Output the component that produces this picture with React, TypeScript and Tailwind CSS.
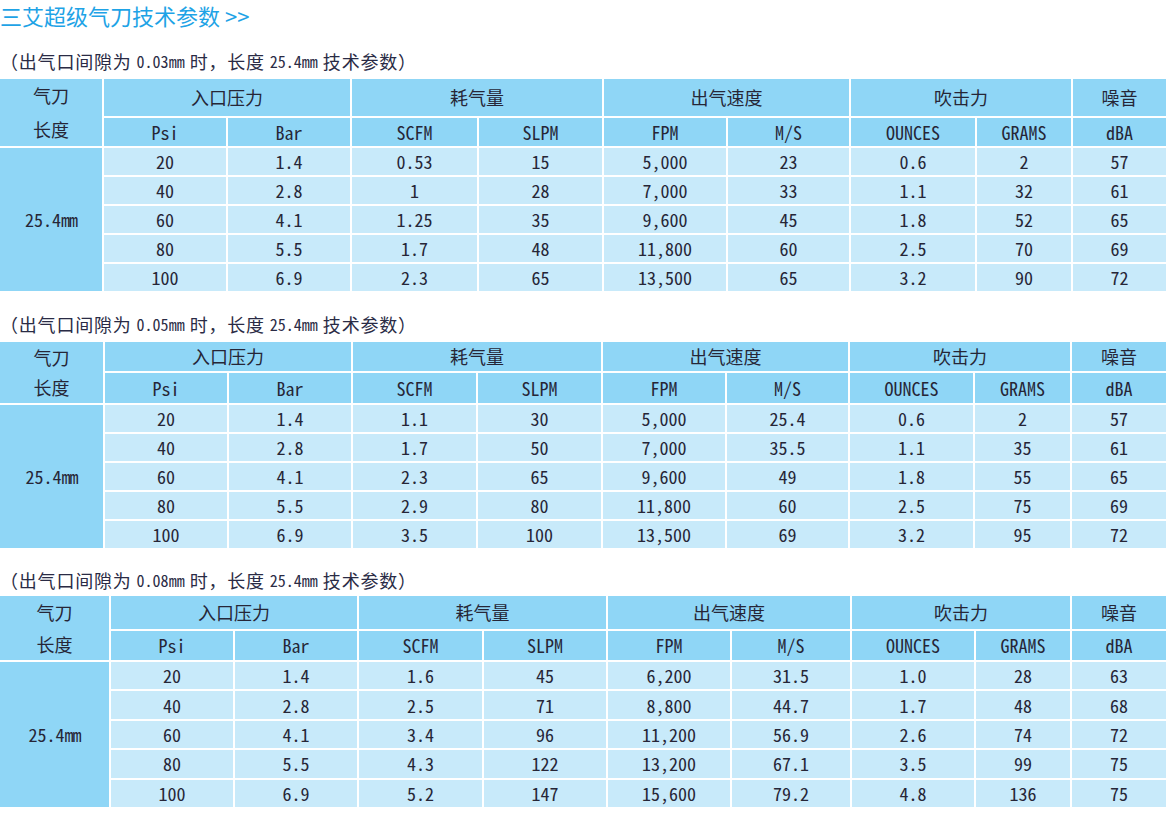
const CJK = "font-['Noto_Sans_Mono_CJK_SC','Noto_Sans_CJK_SC','DejaVu_Sans_Mono',monospace]"

type Spec = {
  gap: string
  cols: string
  rows: string
  gapTop: string
  tableTop: string
  data: string[][]
}

const specs: Spec[] = [
  {
    gap: '0.03',
    cols: 'grid-cols-[102px_122px_122px_125px_123px_122px_121px_124px_94px_93px]',
    rows: 'grid-rows-[37px_28px_repeat(5,27px)]',
    gapTop: 'mt-[19px]',
    tableTop: 'mt-[6px]',
    data: [
      ['20', '1.4', '0.53', '15', '5,000', '23', '0.6', '2', '57'],
      ['40', '2.8', '1', '28', '7,000', '33', '1.1', '32', '61'],
      ['60', '4.1', '1.25', '35', '9,600', '45', '1.8', '52', '65'],
      ['80', '5.5', '1.7', '48', '11,800', '60', '2.5', '70', '69'],
      ['100', '6.9', '2.3', '65', '13,500', '65', '3.2', '90', '72'],
    ],
  },
  {
    gap: '0.05',
    cols: 'grid-cols-[103px_122px_122px_123px_123px_122px_121px_123px_95px_94px]',
    rows: 'grid-rows-[29px_30px_repeat(5,27px)]',
    gapTop: 'mt-[21px]',
    tableTop: 'mt-[6px]',
    data: [
      ['20', '1.4', '1.1', '30', '5,000', '25.4', '0.6', '2', '57'],
      ['40', '2.8', '1.7', '50', '7,000', '35.5', '1.1', '35', '61'],
      ['60', '4.1', '2.3', '65', '9,600', '49', '1.8', '55', '65'],
      ['80', '5.5', '2.9', '80', '11,800', '60', '2.5', '75', '69'],
      ['100', '6.9', '3.5', '100', '13,500', '69', '3.2', '95', '72'],
    ],
  },
  {
    gap: '0.08',
    cols: 'grid-cols-[109px_122px_122px_123px_122px_122px_118px_122px_94px_94px]',
    rows: 'grid-rows-[33px_29px_repeat(5,27.4px)]',
    gapTop: 'mt-[20px]',
    tableTop: 'mt-[4px]',
    data: [
      ['20', '1.4', '1.6', '45', '6,200', '31.5', '1.0', '28', '63'],
      ['40', '2.8', '2.5', '71', '8,800', '44.7', '1.7', '48', '68'],
      ['60', '4.1', '3.4', '96', '11,200', '56.9', '2.6', '74', '72'],
      ['80', '5.5', '4.3', '122', '13,200', '67.1', '3.5', '99', '75'],
      ['100', '6.9', '5.2', '147', '15,600', '79.2', '4.8', '136', '75'],
    ],
  },
]

const groups: [string, string][] = [
  ['入口压力', 'col-span-2'],
  ['耗气量', 'col-span-2'],
  ['出气速度', 'col-span-2'],
  ['吹击力', 'col-span-2'],
  ['噪音', ''],
]

const units = ['Psi', 'Bar', 'SCFM', 'SLPM', 'FPM', 'M/S', 'OUNCES', 'GRAMS', 'dBA']

function Caption({ gap, className }: { gap: string; className: string }) {
  return (
    <div className={`${className} h-[24px] flex items-center text-[#2a2b45] text-[18px] tracking-[0.8px] ${CJK}`}>
      <span>（出气口间隙为</span>
      <span className="mx-[5px] text-[16px] tracking-normal">{gap}mm</span>
      <span>时，长度</span>
      <span className="mx-[5px] text-[16px] tracking-normal">25.4mm</span>
      <span>技术参数）</span>
    </div>
  )
}

function Cell({ children, className = '' }: { children: React.ReactNode; className?: string }) {
  return <div className={`flex items-center justify-center ${className}`}>{children}</div>
}

function SpecTable({ spec }: { spec: Spec }) {
  return (
    <div className={`${spec.tableTop} grid ${spec.cols} ${spec.rows} gap-[2px] text-[#262637] text-[18px] ${CJK}`}>
      <div className="row-span-2 bg-[#8fd6f6] grid grid-rows-2">
        <Cell>气刀</Cell>
        <Cell>长度</Cell>
      </div>
      {groups.map(([label, span]) => (
        <Cell key={label} className={`${span} bg-[#8fd6f6]`}>
          {label}
        </Cell>
      ))}
      {units.map((u) => (
        <Cell key={u} className="bg-[#8fd6f6]">
          {u}
        </Cell>
      ))}
      <Cell className="row-span-5 bg-[#8fd6f6]">
        25.4<span className="tracking-[-1px]">mm</span>
      </Cell>
      {spec.data.map((row, r) =>
        row.map((v, c) => (
          <Cell key={`${r}-${c}`} className="bg-[#c8eafa]">
            {v}
          </Cell>
        ))
      )}
    </div>
  )
}

export default function App() {
  return (
    <div className="w-[1166px] h-[813px] bg-white overflow-hidden">
      <h1 className="text-[22px] leading-[30px] font-normal text-[#1ea3e6] font-['Noto_Sans_CJK_SC',sans-serif]">
        三艾超级气刀技术参数 &gt;&gt;
      </h1>
      {specs.map((s) => (
        <section key={s.gap}>
          <Caption gap={s.gap} className={s.gapTop} />
          <SpecTable spec={s} />
        </section>
      ))}
    </div>
  )
}
